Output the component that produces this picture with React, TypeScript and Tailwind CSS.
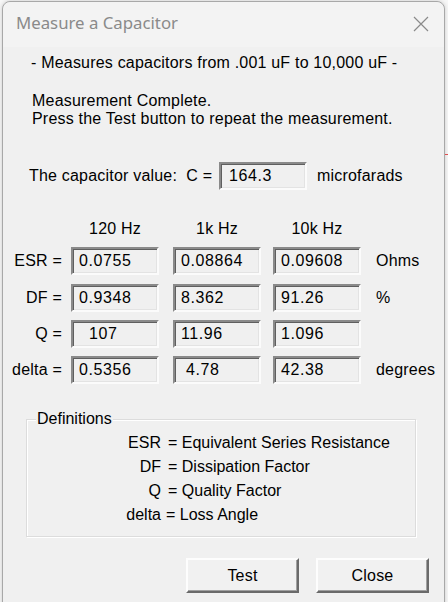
import React from "react";

const sunken =
  "h-[28px] w-[88px] border-2 border-t-[#8a8a8a] border-l-[#8a8a8a] border-b-[#fbfbfb] border-r-[#fbfbfb] shadow-[inset_1px_1px_0_#5f5f5f,inset_-1px_-1px_0_#e3e3e3] bg-[#f0f0f0] flex items-center pl-[6px] whitespace-pre leading-none tracking-[0.6px]";

function Box({ v }: { v: string }) {
  return <div className={sunken}>{v}</div>;
}

function Row({ label, vals, unit, mt }: { label: string; vals: string[]; unit?: string; mt: string }) {
  return (
    <div className={`flex items-center h-[28px] ${mt}`}>
      <div className="w-[60px] text-right pr-[1px]">{label}</div>
      <div className="ml-[8px]"><Box v={vals[0]} /></div>
      <div className="ml-[14px]"><Box v={vals[1]} /></div>
      <div className="ml-[12px]"><Box v={vals[2]} /></div>
      {unit && <div className="ml-[15px]">{unit}</div>}
    </div>
  );
}

function Btn({ label, ml }: { label: string; ml: string }) {
  return (
    <div
      className={`${ml} w-[113px] h-[35px] flex items-center justify-center bg-[#f1f1f1] border-2 border-t-[#fdfdfd] border-l-[#fdfdfd] border-b-[#6a6a6a] border-r-[#6a6a6a] shadow-[inset_-1px_-1px_0_#a0a0a0]`}
    >
      {label}
    </div>
  );
}

export default function App() {
  return (
    <div className="relative w-[448px] h-[602px] bg-[#f7f7f7] overflow-hidden">
      <div className="absolute right-0 top-[154px] w-[3px] h-[1px] bg-[#e05050]" />
      <div
        className="ml-[2px] mt-[1px] w-[443px] h-[620px] border border-[#a8a8a8] rounded-t-[8px] bg-[#f0f0f0] shadow-[0_0_4px_rgba(0,0,0,0.18)] overflow-hidden text-black text-[16px] tracking-[0.2px]"
        style={{ fontFamily: '"Liberation Sans", Arial, sans-serif' }}
      >
        <div className="h-[45px] bg-[#f3f3f3] flex items-center justify-between pl-[13px] pr-[15px] rounded-t-[8px]">
          <div
            className="text-[16.8px] text-[#8a8a8a] leading-none pb-[3px] tracking-normal"
            style={{ fontFamily: '"Noto Sans", "Open Sans", sans-serif' }}
          >
            Measure a Capacitor
          </div>
          <svg width="16" height="16" viewBox="0 0 16 16" className="mb-[1px]">
            <path d="M1 1 L15 15 M15 1 L1 15" stroke="#8a8a8a" strokeWidth="1.2" fill="none" />
          </svg>
        </div>

        <div className="leading-[18px]">
          <div className="mt-[7px] pl-[28px]">- Measures capacitors from .001 uF to 10,000 uF -</div>
          <div className="mt-[20px] pl-[29px]">
            <div>Measurement Complete.</div>
            <div>Press the Test button to repeat the measurement.</div>
          </div>
        </div>

        <div className="mt-[34px] flex items-center h-[28px]">
          <div className="ml-[26px] w-[190px] whitespace-pre">The capacitor value:  C =</div>
          <div className={sunken.replace("pl-[6px]", "pl-[8px]")}>164.3</div>
          <div className="ml-[10px]">microfarads</div>
        </div>

        <div className="mt-[30px] flex h-[18px] items-center leading-[18px]">
          <div className="w-[68px]" />
          <div className="w-[88px] text-center">120 Hz</div>
          <div className="ml-[14px] w-[88px] text-center">1k Hz</div>
          <div className="ml-[12px] w-[88px] text-center">10k Hz</div>
        </div>

        <Row mt="mt-[9px]" label="ESR =" vals={["0.0755", "0.08864", "0.09608"]} unit="Ohms" />
        <Row mt="mt-[9px]" label="DF =" vals={["0.9348", "8.362", "91.26"]} unit="%" />
        <Row mt="mt-[8px]" label="Q =" vals={["  107", "11.96", "1.096"]} />
        <Row mt="mt-[8px]" label="delta =" vals={["0.5356", " 4.78", "42.38"]} unit="degrees" />

        <div className="relative ml-[23px] mt-[35px] w-[390px] h-[118px] border border-[#dcdcdc] shadow-[inset_1px_1px_0_#ffffff,1px_1px_0_#ffffff] tracking-normal">
          <div className="absolute left-[9px] top-[-11px] px-[1px] bg-[#f0f0f0] leading-[20px]">Definitions</div>
          <div className="mt-[11px] grid grid-cols-[134px_auto] gap-x-[7px] leading-[24px] [&>div:nth-child(odd)]:text-right">
            <div>ESR</div><div>= Equivalent Series Resistance</div>
            <div>DF</div><div>= Dissipation Factor</div>
            <div>Q</div><div>= Quality Factor</div>
            <div>delta</div><div className="-ml-[2px]">= Loss Angle</div>
          </div>
        </div>

        <div className="mt-[21px] flex">
          <Btn label="Test" ml="ml-[183px]" />
          <Btn label="Close" ml="ml-[17px]" />
        </div>
      </div>
    </div>
  );
}
